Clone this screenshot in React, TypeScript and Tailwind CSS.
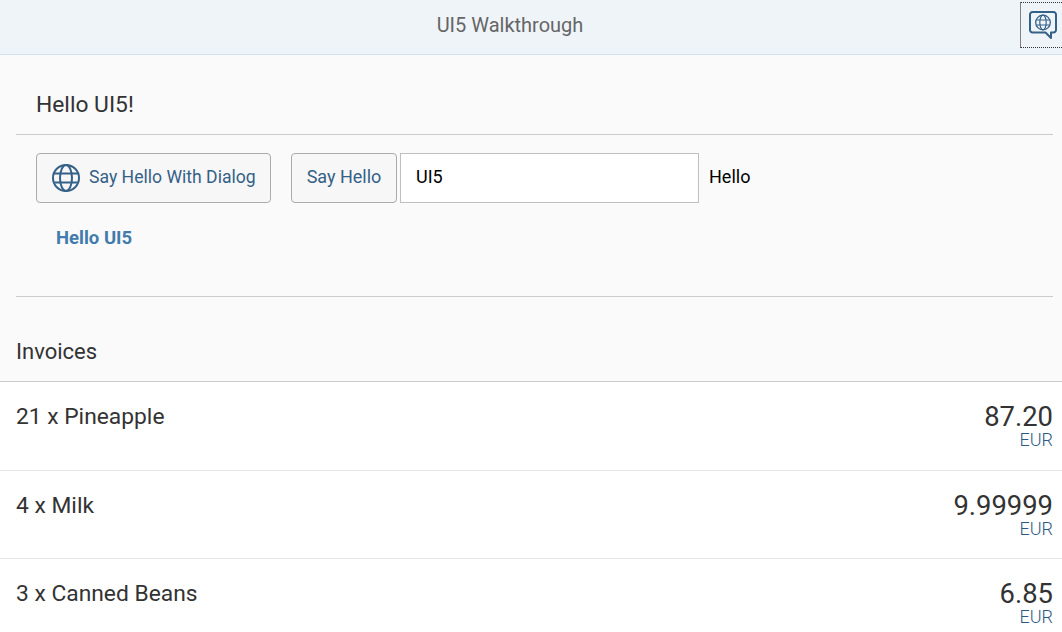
const font = "font-['Roboto',sans-serif]";

const GlobeIcon = ({ className }: { className: string }) => (
  <svg viewBox="0 0 28 28" fill="none" stroke="currentColor" strokeWidth="2" className={className}>
    <circle cx="14" cy="14" r="13" />
    <ellipse cx="14" cy="14" rx="6" ry="13" />
    <path d="M2.5 9.5h23M2.5 18.5h23" />
  </svg>
);

const ChatGlobeIcon = () => (
  <svg viewBox="0 0 28 28" fill="none" className="h-[28px] w-[28px] text-[#346187]">
    <path
      d="M3.5 1h21A2.5 2.5 0 0 1 27 3.500V19a2.500 2.500 0 0 1-2.500 2.500H22V27l-5.500-5.500H3.500A2.500 2.500 0 0 1 1 19V3.500A2.500 2.500 0 0 1 3.500 1Z"
      stroke="currentColor"
      strokeWidth="2"
      strokeLinejoin="round"
    />
    <circle cx="14" cy="11.500" r="7.300" stroke="currentColor" strokeWidth="1.300" />
    <ellipse cx="14" cy="11.500" rx="3.200" ry="7.300" stroke="currentColor" strokeWidth="1.200" />
    <path d="M7.500 9h13M7.500 14h13" stroke="currentColor" strokeWidth="1.200" />
  </svg>
);

const invoices = [
  { name: '21 x Pineapple', price: '87.20' },
  { name: '4 x Milk', price: '9.99999' },
  { name: '3 x Canned Beans', price: '6.85' },
];

const btn = 'h-[50px] rounded-[4px] border border-[#ababab] bg-[#f7f7f7] text-[#346187] flex items-center';

export default function App() {
  return (
    <div className={`h-[632px] w-[1062px] overflow-hidden bg-[#fafafa] ${font}`}>
      <header className="relative flex h-[55px] items-start justify-center border-b border-[#d5e3ef] bg-[#eff4f9] pr-[42px] pt-[12px]">
        <span className="text-[20px] leading-[26px] text-[#666666]">UI5 Walkthrough</span>
        <button className="absolute left-[1020px] top-[2px] flex h-[46px] w-[46px] items-center justify-center border border-dotted border-[#333333] border-l-[#808080] pr-[1px] [border-left-style:solid]">
          <ChatGlobeIcon />
        </button>
      </header>

      <section className="ml-[16px] mr-[9px]">
        <div className="flex h-[80px] items-center border-b border-[#cccccc] px-[20px] pt-[20px]">
          <h2 className="text-[22.800px] leading-[28px] text-[#333333]">Hello UI5!</h2>
        </div>
        <div className="h-[162px] border-b border-[#cccccc] pl-[20px] pt-[18px]">
          <div className="flex items-center">
            <button className={`${btn} w-[235px] gap-[9px] pl-[15px] text-[17.600px]`}>
              <GlobeIcon className="h-[28px] w-[28px] text-[#346187]" />
              <span className="mb-[1px]">Say Hello With Dialog</span>
            </button>
            <button className={`${btn} ml-[20px] w-[106px] justify-center pb-[3px] text-[18px]`}>Say Hello</button>
            <input
              readOnly
              value="UI5"
              className="ml-[3px] h-[50px] w-[299px] border border-[#bfbfbf] bg-white px-[15px] pb-[3px] text-[18px] text-[#000000] outline-none"
            />
            <span className="ml-[10px] pb-[3px] text-[18px] text-[#000000]">Hello</span>
          </div>
          <p className="ml-[20px] mt-[21px] text-[18.500px] font-bold leading-[28px] text-[#427cac]">Hello UI5</p>
        </div>
      </section>

      <div className="flex h-[85px] items-end border-b border-[#cccccc] px-[16px] pb-[15px]">
        <h2 className="text-[22px] leading-[28px] text-[#333333]">Invoices</h2>
      </div>

      <ul className="bg-white">
        {invoices.map(item => (
          <li key={item.name} className="flex h-[88.500px] items-start justify-between border-b border-[#e5e5e5] pl-[16px] pr-[9px] pt-[20px]">
            <span className="text-[22.800px] leading-[30px] text-[#333333]">{item.name}</span>
            <div className="flex flex-col items-end">
              <span className="text-[27.400px] leading-[30px] text-[#333333]">{item.price}</span>
              <span className="text-[18px] font-light leading-[16px] text-[#2f5a80]">EUR</span>
            </div>
          </li>
        ))}
      </ul>
    </div>
  );
}
